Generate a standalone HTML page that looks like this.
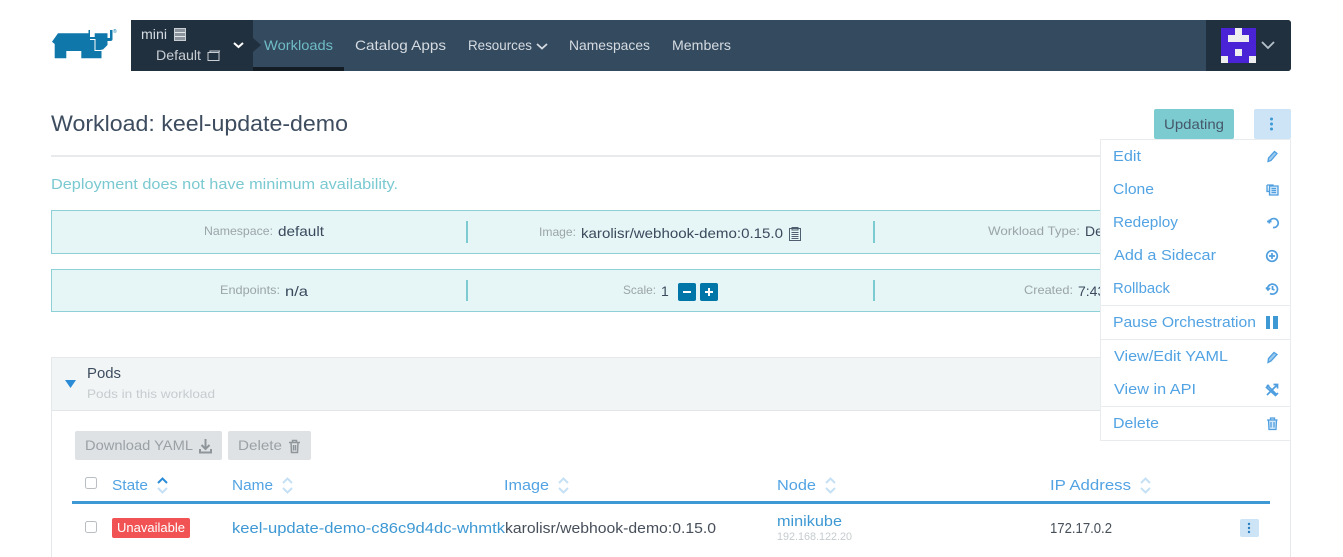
<!DOCTYPE html>
<html lang="en"><head><meta charset="utf-8"><title>Workload: keel-update-demo</title>
<style>
html,body{margin:0;padding:0;background:#fff;width:1343px;height:557px;overflow:hidden}
svg{display:block}
text{font-family:"Liberation Sans","DejaVu Sans",sans-serif;font-size:14px;fill:#3d4d5f}
.nav{fill:#d5dbe1}
.lbl{font-size:12px;fill:#9ba5a9}
.val{fill:#3a4a5c}
.m{fill:#52a3e3;font-size:15px}
.h{fill:#52a3e3;font-size:15px}
.ic{fill:none;stroke:#4f9fe0;stroke-width:1.3}
.sort{fill:none;stroke:#c5e0f5;stroke-width:2}
</style></head><body>
<svg width="1343" height="557" viewBox="0 0 1343 557" xmlns="http://www.w3.org/2000/svg">
<!-- logo -->
<path fill="#0f77aa" d="M52 41.700L58 33.300H88.500V30H90V37H94.700V33.300H107.500V38H110V30H112.500V39.500Q112.500 41 110 41H107.500V45L103 49.500H101.500V58.300H81.300V51H66.300V58.300H54.700V44Z"/>
<path fill="none" stroke="#fff" stroke-width="1" d="M90 39.500H95V50.500H102"/>
<text x="113" y="33" style="font-size:5px;fill:#0075a8">®</text>
<!-- navbar -->
<path fill="#344a5f" d="M131 20H1288a3 3 0 0 1 3 3V68a3 3 0 0 1-3 3H131Z"/>
<rect x="131" y="20" width="122" height="51" fill="#21303f"/>
<path fill="#21303f" d="M253 38l8 7-8 7Z"/>
<rect x="253" y="67" width="91" height="4" fill="#141d26"/>
<path fill="#21303f" d="M1206 20H1288a3 3 0 0 1 3 3V68a3 3 0 0 1-3 3H1206Z"/>
<text class="nav" x="141" y="39" textLength="26" lengthAdjust="spacingAndGlyphs">mini</text>
<g fill="none" stroke="#c8ced4"><rect x="174.500" y="28.500" width="11" height="12" fill="#8b949d"/><path d="M175 32.500H185M175 36.500H185" stroke="#e6e9ec"/></g>
<text class="nav" x="156" y="60" textLength="45" lengthAdjust="spacingAndGlyphs" style="fill:#c8ced4">Default</text>
<path fill="none" stroke="#c8ced4" d="M208 52.500H219V60.500H208ZM210 52.500V51H219.500L218.500 53"/>
<path fill="none" stroke="#fff" stroke-width="2" d="M234 43l4.500 4 4.500-4"/>
<text x="264" y="50" textLength="69" lengthAdjust="spacingAndGlyphs" style="fill:#6fbcc6">Workloads</text>
<text class="nav" x="355" y="50" textLength="91" lengthAdjust="spacingAndGlyphs">Catalog Apps</text>
<text class="nav" x="468" y="50" textLength="64" lengthAdjust="spacingAndGlyphs">Resources</text>
<path fill="none" stroke="#d5dbe1" stroke-width="1.800" d="M537 44l5 4.500 5-4.500"/>
<text class="nav" x="569" y="50" textLength="81" lengthAdjust="spacingAndGlyphs">Namespaces</text>
<text class="nav" x="672" y="50" textLength="59" lengthAdjust="spacingAndGlyphs">Members</text>
<!-- avatar -->
<rect x="1221" y="28" width="35" height="35" fill="#4a23d6"/>
<g fill="#eeeef0"><rect x="1235" y="28" width="7" height="7"/><rect x="1228" y="35" width="21" height="7"/><rect x="1235" y="49" width="7" height="7"/><rect x="1221" y="56" width="7" height="7"/><rect x="1249" y="56" width="7" height="7"/></g>
<path fill="none" stroke="#b5c2cc" stroke-width="1.800" d="M1262 42l6 6 6-6"/>
<!-- title -->
<text x="51" y="131" textLength="297" lengthAdjust="spacingAndGlyphs" style="font-size:22px;fill:#3d4d5f">Workload: keel-update-demo</text>
<rect x="1154" y="109" width="80" height="30" rx="2" fill="#7bcbd0"/>
<text x="1164" y="129" textLength="60" lengthAdjust="spacingAndGlyphs" style="fill:#46586a">Updating</text>
<rect x="1254" y="109" width="37" height="30" rx="2" fill="#cce4f6"/>
<g fill="#3d98d3"><circle cx="1271.500" cy="119" r="1.500"/><circle cx="1271.500" cy="124" r="1.500"/><circle cx="1271.500" cy="129" r="1.500"/></g>
<rect x="51" y="155" width="1050" height="2" fill="#e8eaec"/>
<text x="51" y="189" textLength="347" lengthAdjust="spacingAndGlyphs" style="font-size:15px;fill:#7ac9d1">Deployment does not have minimum availability.</text>
<!-- info boxes -->
<rect x="51.500" y="210.500" width="1239" height="43" fill="#e6f5f6" stroke="#8dd0d6"/>
<rect x="51.500" y="269.500" width="1239" height="42" fill="#e6f5f6" stroke="#8dd0d6"/>
<g fill="#7bcbd0"><rect x="466" y="221" width="2" height="22"/><rect x="873" y="221" width="2" height="22"/><rect x="466" y="280" width="2" height="21"/><rect x="873" y="280" width="2" height="21"/></g>
<text class="lbl" x="204" y="235" textLength="69" lengthAdjust="spacingAndGlyphs">Namespace:</text>
<text class="val" x="278" y="236" textLength="46" lengthAdjust="spacingAndGlyphs">default</text>
<text class="lbl" x="539" y="236" textLength="37" lengthAdjust="spacingAndGlyphs">Image:</text>
<text class="val" x="581" y="238" textLength="202" lengthAdjust="spacingAndGlyphs">karolisr/webhook-demo:0.15.0</text>
<path fill="none" stroke="#4f5f6f" d="M789.500 228.500H800.500V240.500H789.500ZM792 227.500H798V230H792ZM791.500 232.500H798.500M791.500 234.500H798.500M791.500 236.500H798.500M791.500 238.500H798.500"/>
<text class="lbl" x="988" y="235" textLength="92" lengthAdjust="spacingAndGlyphs">Workload Type:</text>
<text class="val" x="1085" y="236">De</text>
<text class="lbl" x="220" y="294" textLength="60" lengthAdjust="spacingAndGlyphs">Endpoints:</text>
<text class="val" x="285" y="296" textLength="23" lengthAdjust="spacingAndGlyphs">n/a</text>
<text class="lbl" x="623" y="294" textLength="33" lengthAdjust="spacingAndGlyphs">Scale:</text>
<text class="val" x="661" y="296">1</text>
<rect x="678" y="283" width="18" height="18" rx="2" fill="#0075a8"/>
<rect x="700" y="283" width="18" height="18" rx="2" fill="#0075a8"/>
<path stroke="#fff" stroke-width="2" d="M683 292H691M705 292H713M709 288V296"/>
<text class="lbl" x="1024" y="294" textLength="49" lengthAdjust="spacingAndGlyphs">Created:</text>
<text class="val" x="1078" y="296">7:43</text>
<!-- pods -->
<rect x="51.500" y="357.500" width="1239" height="210" fill="#fff" stroke="#e6e9eb"/>
<rect x="52" y="358" width="1238" height="52" fill="#f2f5f6"/>
<rect x="52" y="410" width="1238" height="1" fill="#e3e6e8"/>
<path fill="#2a8bd6" d="M65 380H76L70.500 388Z"/>
<text x="87" y="378" textLength="34" lengthAdjust="spacingAndGlyphs" style="font-size:15px;fill:#3d4d5f">Pods</text>
<text x="87" y="398" textLength="128" lengthAdjust="spacingAndGlyphs" style="font-size:12px;fill:#c5cbce">Pods in this workload</text>
<rect x="75" y="431" width="147" height="29" rx="2" fill="#dfe2e4"/>
<rect x="228" y="431" width="83" height="29" rx="2" fill="#dfe2e4"/>
<text x="85" y="450" textLength="108" lengthAdjust="spacingAndGlyphs" style="fill:#9aa1a6">Download YAML</text>
<path fill="none" stroke="#8f969b" stroke-width="2" d="M205.500 439V449M201.500 445l4 4 4-4M200 449V452.500H211V449"/>
<text x="238" y="450" textLength="44" lengthAdjust="spacingAndGlyphs" style="fill:#9aa1a6">Delete</text>
<path fill="none" stroke="#8f969b" stroke-width="1.500" d="M289 442.500H300M291 442.500L291.500 452.500H297.500L298 442.500M292.500 442V440.500H296.500V442M293.500 445V450.500M295.500 445V450.500"/>
<!-- table -->
<rect x="85.500" y="477.500" width="11" height="11" rx="2" fill="#fff" stroke="#b9bec2"/>
<text class="h" x="112" y="490" textLength="36" lengthAdjust="spacingAndGlyphs">State</text>
<path fill="none" stroke="#2a8bd6" stroke-width="2" d="M158 483l4.500-4.500 4.500 4.500"/>
<path class="sort" d="M158 488l4.500 4.500 4.500-4.500"/>
<text class="h" x="232" y="490" textLength="41" lengthAdjust="spacingAndGlyphs">Name</text>
<path class="sort" d="M283 483l4.500-4.500 4.500 4.500M283 488l4.500 4.500 4.500-4.500"/>
<text class="h" x="504" y="490" textLength="45" lengthAdjust="spacingAndGlyphs">Image</text>
<path class="sort" d="M559 483l4.500-4.500 4.500 4.500M559 488l4.500 4.500 4.500-4.500"/>
<text class="h" x="777" y="490" textLength="39" lengthAdjust="spacingAndGlyphs">Node</text>
<path class="sort" d="M826 483l4.500-4.500 4.500 4.500M826 488l4.500 4.500 4.500-4.500"/>
<text class="h" x="1050" y="490" textLength="81" lengthAdjust="spacingAndGlyphs">IP Address</text>
<path class="sort" d="M1141 483l4.500-4.500 4.500 4.500M1141 488l4.500 4.500 4.500-4.500"/>
<rect x="72" y="501" width="1198" height="3" fill="#3d98d3"/>
<rect x="85.500" y="521.500" width="11" height="11" rx="2" fill="#fff" stroke="#b9bec2"/>
<rect x="112" y="518" width="78" height="20" rx="2" fill="#f15354"/>
<text x="117" y="532" textLength="68" lengthAdjust="spacingAndGlyphs" style="font-size:13px;fill:#fff">Unavailable</text>
<text x="232" y="533" textLength="273" lengthAdjust="spacingAndGlyphs" style="font-size:15px;fill:#3d98d3">keel-update-demo-c86c9d4dc-whmtk</text>
<text x="505" y="533" textLength="211" lengthAdjust="spacingAndGlyphs" style="font-size:15px;fill:#474f5a">karolisr/webhook-demo:0.15.0</text>
<text x="777" y="526" textLength="65" lengthAdjust="spacingAndGlyphs" style="font-size:15px;fill:#3d98d3">minikube</text>
<text x="777" y="540" textLength="75" lengthAdjust="spacingAndGlyphs" style="font-size:11px;fill:#c5cbce">192.168.122.20</text>
<text x="1050" y="533" textLength="62" lengthAdjust="spacingAndGlyphs" style="font-size:15px;fill:#474f5a">172.17.0.2</text>
<rect x="1240" y="519" width="19" height="18" rx="2" fill="#cce4f6"/>
<g fill="#2a7fc0"><circle cx="1249" cy="524" r="1.200"/><circle cx="1249" cy="528" r="1.200"/><circle cx="1249" cy="532" r="1.200"/></g>
<!-- menu -->
<rect x="1100.500" y="139.500" width="190" height="301" fill="#fff" stroke="#e8ecef"/>
<g fill="#e8ecef"><rect x="1101" y="305" width="189" height="1"/><rect x="1101" y="339" width="189" height="1"/><rect x="1101" y="406" width="189" height="1"/></g>
<text class="m" x="1113" y="161" textLength="28" lengthAdjust="spacingAndGlyphs">Edit</text>
<text class="m" x="1113" y="194" textLength="41" lengthAdjust="spacingAndGlyphs">Clone</text>
<text class="m" x="1113" y="227" textLength="65" lengthAdjust="spacingAndGlyphs">Redeploy</text>
<text class="m" x="1114" y="260" textLength="102" lengthAdjust="spacingAndGlyphs">Add a Sidecar</text>
<text class="m" x="1113" y="293" textLength="57" lengthAdjust="spacingAndGlyphs">Rollback</text>
<text class="m" x="1113" y="327" textLength="143" lengthAdjust="spacingAndGlyphs">Pause Orchestration</text>
<text class="m" x="1114" y="361" textLength="114" lengthAdjust="spacingAndGlyphs">View/Edit YAML</text>
<text class="m" x="1114" y="394" textLength="82" lengthAdjust="spacingAndGlyphs">View in API</text>
<text class="m" x="1113" y="428" textLength="46" lengthAdjust="spacingAndGlyphs">Delete</text>
<!-- menu icons -->
<path class="ic" fill="#9ccbf0" style="fill:#9ccbf0" d="M1268 161.500L1268.500 158L1274.500 151.500L1277 153.500L1271 160.500Z"/>
<path class="ic" style="fill:#d5e9f9" d="M1269.500 186H1278V195H1269.500ZM1271.500 188.500H1276M1271.500 190.500H1276M1271.500 192.500H1276M1267 185V191.500H1269.500M1267 185H1273V186"/>
<path class="ic" stroke-width="1.700" d="M1269.500 221.500A4.500 4.500 0 1 1 1273 227.500M1267 221.500H1271.500M1269.300 219.500V223.500" style="stroke-width:1.700"/>
<circle class="ic" cx="1272" cy="256" r="5.300" style="stroke-width:1.700"/><path class="ic" style="stroke-width:1.700" d="M1269 256H1275M1272 253V259"/>
<path class="ic" style="stroke-width:1.700" d="M1267.500 288.500A5 5 0 1 1 1270 293.500M1272.500 286V289.200L1274.500 290M1266 287.500L1268 290L1270 288"/>
<path fill="#3d98d3" d="M1266 316H1270V329H1266ZM1273 316H1278V329H1273Z"/>
<path class="ic" style="fill:#9ccbf0" d="M1268 362.500L1268.500 358.500L1274 352.500L1277 354.500L1271 361Z"/>
<path class="ic" style="stroke-width:1.700" d="M1267 385L1276 394M1269 385L1266.500 387.500L1275.500 395.500L1278 393M1267 395L1277 385M1273.500 384.500H1277.500V388.500"/>
<path class="ic" style="fill:#d5e9f9" d="M1267 420H1277.500M1268.500 420.500L1269 429.500H1276L1276.500 420.500M1270.500 420V418H1274.500V420M1271 422V427.500M1274 422V427.500"/>
</svg>
</body></html>
